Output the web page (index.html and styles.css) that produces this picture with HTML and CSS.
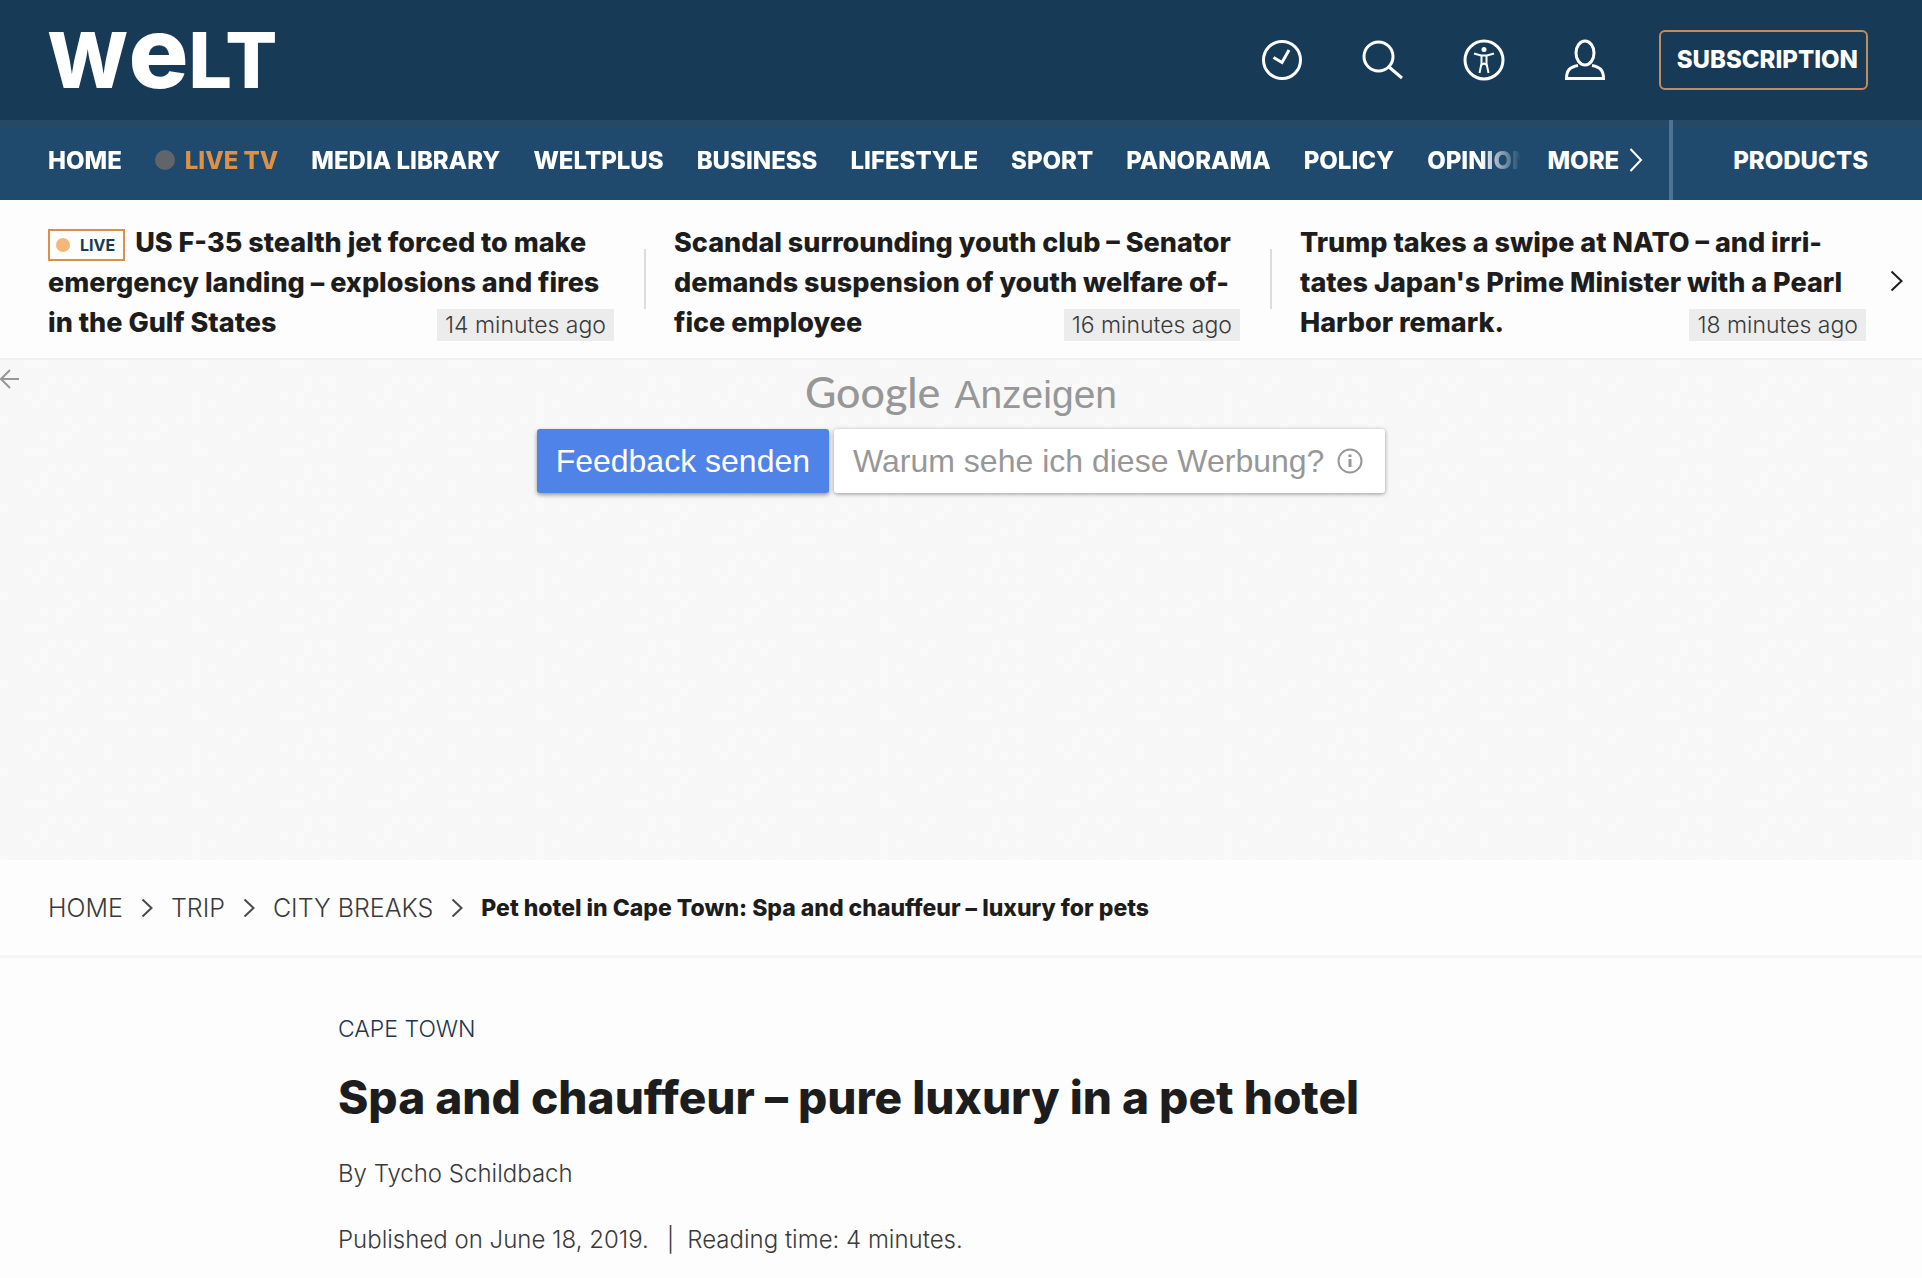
FILE: index.html
```html
<!DOCTYPE html>
<html lang="en">
<head>
    <meta charset="UTF-8">
    <meta name="viewport" content="width=device-width, initial-scale=1.0">
    <title>Spa and chauffeur – pure luxury in a pet hotel - WELT</title>
    <link rel="stylesheet" href="styles.css">
</head>
<body>
    <header class="header">
        <a href="#" class="logo" aria-label="WELT"><span>W</span><span class="logo-e">e</span><span>LT</span></a>

        <div class="header-tools">
            <button type="button" class="icon-btn" aria-label="Latest news">
                <svg width="42" height="42" viewBox="0 0 42 42">
                    <circle cx="21" cy="21" r="18.5"/>
                    <path d="M12.5 18.5l8.5 5 7-12.5"/>
                </svg>
            </button>
            <button type="button" class="icon-btn" aria-label="Search">
                <svg width="42" height="42" viewBox="0 0 42 42">
                    <circle cx="16.5" cy="17.5" r="14.5"/>
                    <path d="M27 28l13 11"/>
                </svg>
            </button>
            <button type="button" class="icon-btn" aria-label="Accessibility">
                <svg width="42" height="42" viewBox="0 0 42 42">
                    <circle cx="21" cy="21" r="19"/>
                    <circle class="solid" cx="21" cy="10.5" r="2.5"/>
                    <path d="M11 14.5l7 2h6l7-2M18.500 16.500v8l-2 9.500M23.500 16.500v8l2 9.500M18.500 26l2.500-1.500 2.500 1.500" stroke-width="2"/>
                </svg>
            </button>
            <button type="button" class="icon-btn" aria-label="Profile">
                <svg width="42" height="42" viewBox="0 0 42 42">
                    <ellipse cx="21" cy="14" rx="9" ry="12"/>
                    <path d="M14 26.5C6 28 2.5 31 2.5 39.5h37C39.5 31 36 28 28 26.5"/>
                </svg>
            </button>
            <a href="#" class="subscribe">SUBSCRIPTION</a>
        </div>
    </header>

    <nav class="nav">
        <ul class="nav-list">
            <li><a href="#">HOME</a></li>
            <li><a href="#" class="live"><span class="dot"></span>LIVE TV</a></li>
            <li><a href="#">MEDIA LIBRARY</a></li>
            <li><a href="#">WELTPLUS</a></li>
            <li><a href="#">BUSINESS</a></li>
            <li><a href="#">LIFESTYLE</a></li>
            <li><a href="#">SPORT</a></li>
            <li><a href="#">PANORAMA</a></li>
            <li><a href="#">POLICY</a></li>
            <li><a href="#">OPINION</a></li>
        </ul>
        <button type="button" class="more">MORE
            <svg width="14" height="26" viewBox="0 0 14 26"><path d="M1.5 2l10.5 11L1.5 24"/></svg>
        </button>
        <a href="#" class="products">PRODUCTS</a>
    </nav>

    <section class="ticker" aria-label="Newsticker">
        <article class="ticker-item">
            <h2><a href="#"><span class="live-badge"><span class="live-dot"></span>LIVE</span>US F-35 stealth jet forced to make<br>emergency landing – explosions and fires<br>in the Gulf States</a></h2>
            <time class="ago">14 minutes ago</time>
        </article>
        <article class="ticker-item">
            <h2><a href="#">Scandal surrounding youth club – Senator<br>demands suspension of youth welfare of-<br>fice employee</a></h2>
            <time class="ago">16 minutes ago</time>
        </article>
        <article class="ticker-item">
            <h2><a href="#">Trump takes a swipe at NATO – and irri-<br>tates Japan's Prime Minister with a Pearl<br>Harbor remark.</a></h2>
            <time class="ago">18 minutes ago</time>
        </article>
        <button type="button" class="ticker-next" aria-label="Next">
            <svg width="14" height="22" viewBox="0 0 14 22"><path d="M1.5 1.5l10 9.5-10 9.5"/></svg>
        </button>
    </section>

    <aside class="ad">
        <svg class="ad-texture" width="100%" height="100%" aria-hidden="true">
            <defs>
                <pattern id="cells" width="344" height="88" y="32" patternUnits="userSpaceOnUse">
                    <path transform="scale(8)" d="M3 0h1v1h-1zM5 0h1v1h-1zM13 0h1v2h-1zM24 0h1v4h-1zM35 0h1v1h-1zM37 0h1v2h-1zM4 1h1v1h-1zM7 1h1v1h-1zM26 1h1v1h-1zM39 1h1v1h-1zM41 1h1v1h-1zM0 3h1v1h-1zM8 3h1v1h-1zM11 3h1v1h-1zM16 3h1v1h-1zM19 3h1v1h-1zM22 3h1v1h-1zM27 3h1v1h-1zM32 3h1v1h-1zM35 3h1v1h-1zM40 3h2v1h-2zM9 4h1v1h-1zM20 4h1v1h-1zM31 4h1v1h-1zM42 4h1v1h-1zM5 5h1v1h-1zM7 5h2v1h-2zM13 5h1v1h-1zM16 5h1v1h-1zM18 5h2v1h-2zM29 5h1v1h-1zM37 5h1v1h-1zM41 5h1v2h-1zM7 6h1v1h-1zM24 6h1v1h-1zM39 6h1v1h-1zM3 7h3v1h-3zM13 7h3v1h-3zM24 7h2v1h-2zM35 7h3v1h-3zM6 9h1v1h-1zM8 9h1v1h-1zM10 9h1v1h-1zM16 9h1v1h-1zM19 9h2v1h-2zM27 9h1v1h-1zM30 9h1v1h-1zM38 9h1v2h-1zM40 9h2v1h-2zM5 10h1v1h-1zM9 10h1v1h-1zM29 10h1v1h-1zM41 10h1v1h-1z"/>
                </pattern>
            </defs>
            <rect width="100%" height="100%" fill="url(#cells)"/>
        </svg>
        <button type="button" class="ad-back" aria-label="Back">
            <svg width="20" height="22" viewBox="0 0 20 22"><path d="M19 11H1M10 2L1 11l9 9"/></svg>
        </button>
        <p class="ad-title"><span class="google">Google</span>Anzeigen</p>
        <div class="ad-actions">
            <button type="button" class="ad-feedback">Feedback senden</button>
            <button type="button" class="ad-why">Warum sehe ich diese Werbung?
                <svg width="26" height="26" viewBox="0 0 26 26">
                    <circle cx="13" cy="13" r="11.5"/>
                    <path d="M13 11v8M13 6.5v2.5" stroke-width="3"/>
                </svg>
            </button>
        </div>
    </aside>

    <nav class="breadcrumb" aria-label="Breadcrumb">
        <a href="#">HOME</a>
        <svg width="12" height="20" viewBox="0 0 12 20"><path d="M1.5 1.5l9 8.5-9 8.5"/></svg>
        <a href="#">TRIP</a>
        <svg width="12" height="20" viewBox="0 0 12 20"><path d="M1.5 1.5l9 8.5-9 8.5"/></svg>
        <a href="#">CITY BREAKS</a>
        <svg width="12" height="20" viewBox="0 0 12 20"><path d="M1.5 1.5l9 8.5-9 8.5"/></svg>
        <strong>Pet hotel in Cape Town: Spa and chauffeur – luxury for pets</strong>
    </nav>

    <main class="article">
        <p class="topic">CAPE TOWN</p>
        <h1>Spa and chauffeur – pure luxury in a pet hotel</h1>
        <p class="byline">By Tycho Schildbach</p>
        <p class="meta"><time datetime="2019-06-18">Published on June 18, 2019.</time><span class="bar">|</span>Reading time: 4 minutes.</p>
    </main>
</body>
</html>
```
FILE: styles.css
```css
* {
    box-sizing: border-box;
}
body {
    margin: 0;
    font-family: Inter, "Liberation Sans", sans-serif;
    color: #1d1d1d;
    background-color: #fdfdfd;
}
a {
    color: inherit;
    text-decoration: none;
}
button {
    font: inherit;
    color: inherit;
    background: none;
    border: none;
    padding: 0;
    cursor: pointer;
}
svg {
    display: block;
    fill: none;
    stroke: currentColor;
    stroke-width: 2;
}
h1, h2, p, ul {
    margin: 0;
}

/* Header */
.header {
    display: flex;
    justify-content: space-between;
    align-items: center;
    height: 120px;
    padding: 0 54px 0 47px;
    background-color: #173a57;
    color: #fff;
}
.logo {
    display: flex;
    align-items: baseline;
    padding-bottom: 8px;
    font-size: 77px;
    font-weight: 800;
    line-height: 112px;
}
.logo-e {
    font-size: 100px;
}
.header-tools {
    display: flex;
    align-items: center;
    gap: 59px;
}
.header-tools svg {
    stroke-width: 3;
}
.header-tools .solid {
    fill: currentColor;
    stroke: none;
}
.subscribe {
    margin-left: -6px;
    padding: 0 8px 0 16px;
    border: 2px solid #c08d5e;
    border-radius: 6px;
    font-size: 24px;
    font-weight: 800;
    line-height: 56px;
}

/* Main navigation */
.nav {
    display: flex;
    align-items: center;
    height: 80px;
    padding-left: 48px;
    background: linear-gradient(#264a66 8px, #1f4a6d 8px);
    color: #fff;
    font-size: 24px;
    font-weight: 800;
}
.nav-list {
    display: flex;
    flex: 1;
    gap: 33px;
    min-width: 0;
    padding: 0;
    overflow: hidden;
    list-style: none;
    white-space: nowrap;
    mask-image: linear-gradient(to left, transparent, #000 40px);
}
.live {
    display: flex;
    align-items: center;
    gap: 10px;
    color: #dc9147;
}
.dot {
    width: 20px;
    height: 20px;
    border-radius: 50%;
    background-color: #60656b;
}
.more {
    display: flex;
    align-items: center;
    gap: 10px;
    margin: 0 26px;
}
.products {
    display: flex;
    align-items: center;
    align-self: stretch;
    padding: 0 54px 0 60px;
    border-left: 4px solid #4d7494;
}

/* Ticker */
.ticker {
    display: grid;
    grid-template-columns: repeat(3, 1fr);
    position: relative;
    padding: 23px 24px 15px 20px;
    border-bottom: 2px solid #f0f0f0;
}
.ticker-item {
    position: relative;
    padding: 0 28px;
}
.ticker-item:not(:first-child)::before {
    content: "";
    position: absolute;
    left: -2px;
    top: 26px;
    width: 2px;
    height: 60px;
    background-color: #dcdcdc;
}
.ticker h2 {
    font-size: 27px;
    font-weight: 800;
    line-height: 40px;
    white-space: nowrap;
}
.live-badge {
    display: inline-flex;
    align-items: center;
    gap: 10px;
    height: 32px;
    margin-right: 10px;
    padding: 0 8px 0 6px;
    border: 2px solid #d9904a;
    color: #173a57;
    font-size: 16px;
    font-weight: 700;
    vertical-align: middle;
}
.live-dot {
    width: 14px;
    height: 14px;
    border-radius: 50%;
    background-color: #f5b679;
}
.ago {
    position: absolute;
    right: 32px;
    bottom: 2px;
    padding: 0 8px;
    background-color: #ececec;
    color: #3a3a3a;
    font-size: 23px;
    font-weight: 300;
    line-height: 32px;
}
.ticker-next {
    position: absolute;
    right: 18px;
    top: 70px;
}

/* Advertisement */
.ad {
    position: relative;
    height: 500px;
    padding-top: 8px;
    background-color: #f7f7f7;
    color: #979797;
    font-family: "Liberation Sans", Arial, sans-serif;
    text-align: center;
}
.ad-texture {
    position: absolute;
    inset: 0;
    fill: #fafafa;
    stroke: none;
}
.ad-back {
    position: absolute;
    left: 0;
    top: 8px;
}
.ad-title {
    position: relative;
    font-size: 39px;
    line-height: 48px;
}
.google {
    margin-right: 14px;
    font-family: Lato, sans-serif;
    font-size: 43px;
    font-weight: 500;
}
.ad-actions {
    display: flex;
    justify-content: center;
    gap: 5px;
    position: relative;
    margin-top: 10px;
    font-size: 32px;
    line-height: 64px;
}
.ad-feedback {
    padding: 0 19px;
    border-radius: 3px;
    background-color: #4f83e8;
    color: #fff;
    box-shadow: 0 2px 4px rgba(0,0,0,0.4);
}
.ad-why {
    display: flex;
    align-items: center;
    gap: 13px;
    padding: 0 22px 0 19px;
    border-radius: 3px;
    background-color: #fff;
    box-shadow: 0 1px 4px rgba(0,0,0,0.4);
}

/* Breadcrumb */
.breadcrumb {
    display: flex;
    align-items: center;
    gap: 18px;
    height: 98px;
    padding: 0 48px;
    border-bottom: 3px solid #f5f5f5;
    font-size: 23px;
}
.breadcrumb a {
    color: #3a3a3a;
    font-size: 25px;
    font-weight: 300;
}
.breadcrumb svg {
    color: #4a4a4a;
}
.breadcrumb strong {
    font-weight: 800;
}

/* Article head */
.article {
    padding: 55px 338px 20px;
    color: #3a3a3a;
    font-size: 24px;
    font-weight: 300;
    line-height: 32px;
}
.topic {
    color: #1f3550;
    font-size: 23px;
}
.article h1 {
    margin: 24px 0 33px;
    color: #1d1d1d;
    font-size: 46px;
    font-weight: 800;
    line-height: 56px;
}
.meta {
    margin-top: 34px;
}
.bar {
    margin: 0 13px 0 18px;
}
```
